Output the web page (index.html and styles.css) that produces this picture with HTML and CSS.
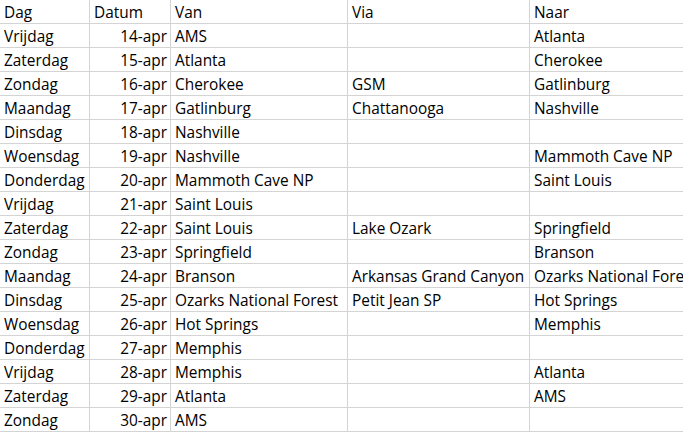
FILE: index.html
```html
<!DOCTYPE html>
<html>
<head>
<meta charset="utf-8">
<link rel="stylesheet" href="styles.css">
</head>
<body>
<div class="sheet">
  <div class="row"><div class="c c1">Dag</div><div class="c c2 left">Datum</div><div class="c c3">Van</div><div class="c c4">Via</div><div class="c c5">Naar</div></div>
  <div class="row"><div class="c c1">Vrijdag</div><div class="c c2">14-apr</div><div class="c c3">AMS</div><div class="c c4"></div><div class="c c5">Atlanta</div></div>
  <div class="row"><div class="c c1">Zaterdag</div><div class="c c2">15-apr</div><div class="c c3">Atlanta</div><div class="c c4"></div><div class="c c5">Cherokee</div></div>
  <div class="row"><div class="c c1">Zondag</div><div class="c c2">16-apr</div><div class="c c3">Cherokee</div><div class="c c4">GSM</div><div class="c c5">Gatlinburg</div></div>
  <div class="row"><div class="c c1">Maandag</div><div class="c c2">17-apr</div><div class="c c3">Gatlinburg</div><div class="c c4">Chattanooga</div><div class="c c5">Nashville</div></div>
  <div class="row"><div class="c c1">Dinsdag</div><div class="c c2">18-apr</div><div class="c c3">Nashville</div><div class="c c4"></div><div class="c c5"></div></div>
  <div class="row"><div class="c c1">Woensdag</div><div class="c c2">19-apr</div><div class="c c3">Nashville</div><div class="c c4"></div><div class="c c5">Mammoth Cave NP</div></div>
  <div class="row"><div class="c c1">Donderdag</div><div class="c c2">20-apr</div><div class="c c3">Mammoth Cave NP</div><div class="c c4"></div><div class="c c5">Saint Louis</div></div>
  <div class="row"><div class="c c1">Vrijdag</div><div class="c c2">21-apr</div><div class="c c3">Saint Louis</div><div class="c c4"></div><div class="c c5"></div></div>
  <div class="row"><div class="c c1">Zaterdag</div><div class="c c2">22-apr</div><div class="c c3">Saint Louis</div><div class="c c4">Lake Ozark</div><div class="c c5">Springfield</div></div>
  <div class="row"><div class="c c1">Zondag</div><div class="c c2">23-apr</div><div class="c c3">Springfield</div><div class="c c4"></div><div class="c c5">Branson</div></div>
  <div class="row"><div class="c c1">Maandag</div><div class="c c2">24-apr</div><div class="c c3">Branson</div><div class="c c4">Arkansas Grand Canyon</div><div class="c c5">Ozarks National Forest</div></div>
  <div class="row"><div class="c c1">Dinsdag</div><div class="c c2">25-apr</div><div class="c c3">Ozarks National Forest</div><div class="c c4">Petit Jean SP</div><div class="c c5">Hot Springs</div></div>
  <div class="row"><div class="c c1">Woensdag</div><div class="c c2">26-apr</div><div class="c c3">Hot Springs</div><div class="c c4"></div><div class="c c5">Memphis</div></div>
  <div class="row"><div class="c c1">Donderdag</div><div class="c c2">27-apr</div><div class="c c3">Memphis</div><div class="c c4"></div><div class="c c5"></div></div>
  <div class="row"><div class="c c1">Vrijdag</div><div class="c c2">28-apr</div><div class="c c3">Memphis</div><div class="c c4"></div><div class="c c5">Atlanta</div></div>
  <div class="row"><div class="c c1">Zaterdag</div><div class="c c2">29-apr</div><div class="c c3">Atlanta</div><div class="c c4"></div><div class="c c5">AMS</div></div>
  <div class="row"><div class="c c1">Zondag</div><div class="c c2">30-apr</div><div class="c c3">AMS</div><div class="c c4"></div><div class="c c5"></div></div>
</div>
</body>
</html>
```
FILE: styles.css
```css
html, body {
  margin: 0;
  padding: 0;
  background: #ffffff;
  overflow: hidden;
}
.sheet {
  font-family: "Open Sans", "Liberation Sans", sans-serif;
  font-size: 15.4px;
  color: #000000;
  width: 683px;
  overflow: hidden;
}
.row {
  display: flex;
  height: 24px;
}
.c {
  box-sizing: border-box;
  flex: none;
  height: 24px;
  border-right: 1px solid #d4d4d4;
  border-bottom: 1px solid #d4d4d4;
  padding: 2px 3px 0 4px;
  line-height: 22px;
  white-space: nowrap;
  overflow: hidden;
}
.c1 { width: 90px; }
.c2 { width: 81px; text-align: right; }
.c2.left { text-align: left; }
.c3 { width: 177px; }
.c4 { width: 182px; }
.c5 { width: 153px; border-right: none; }
```
